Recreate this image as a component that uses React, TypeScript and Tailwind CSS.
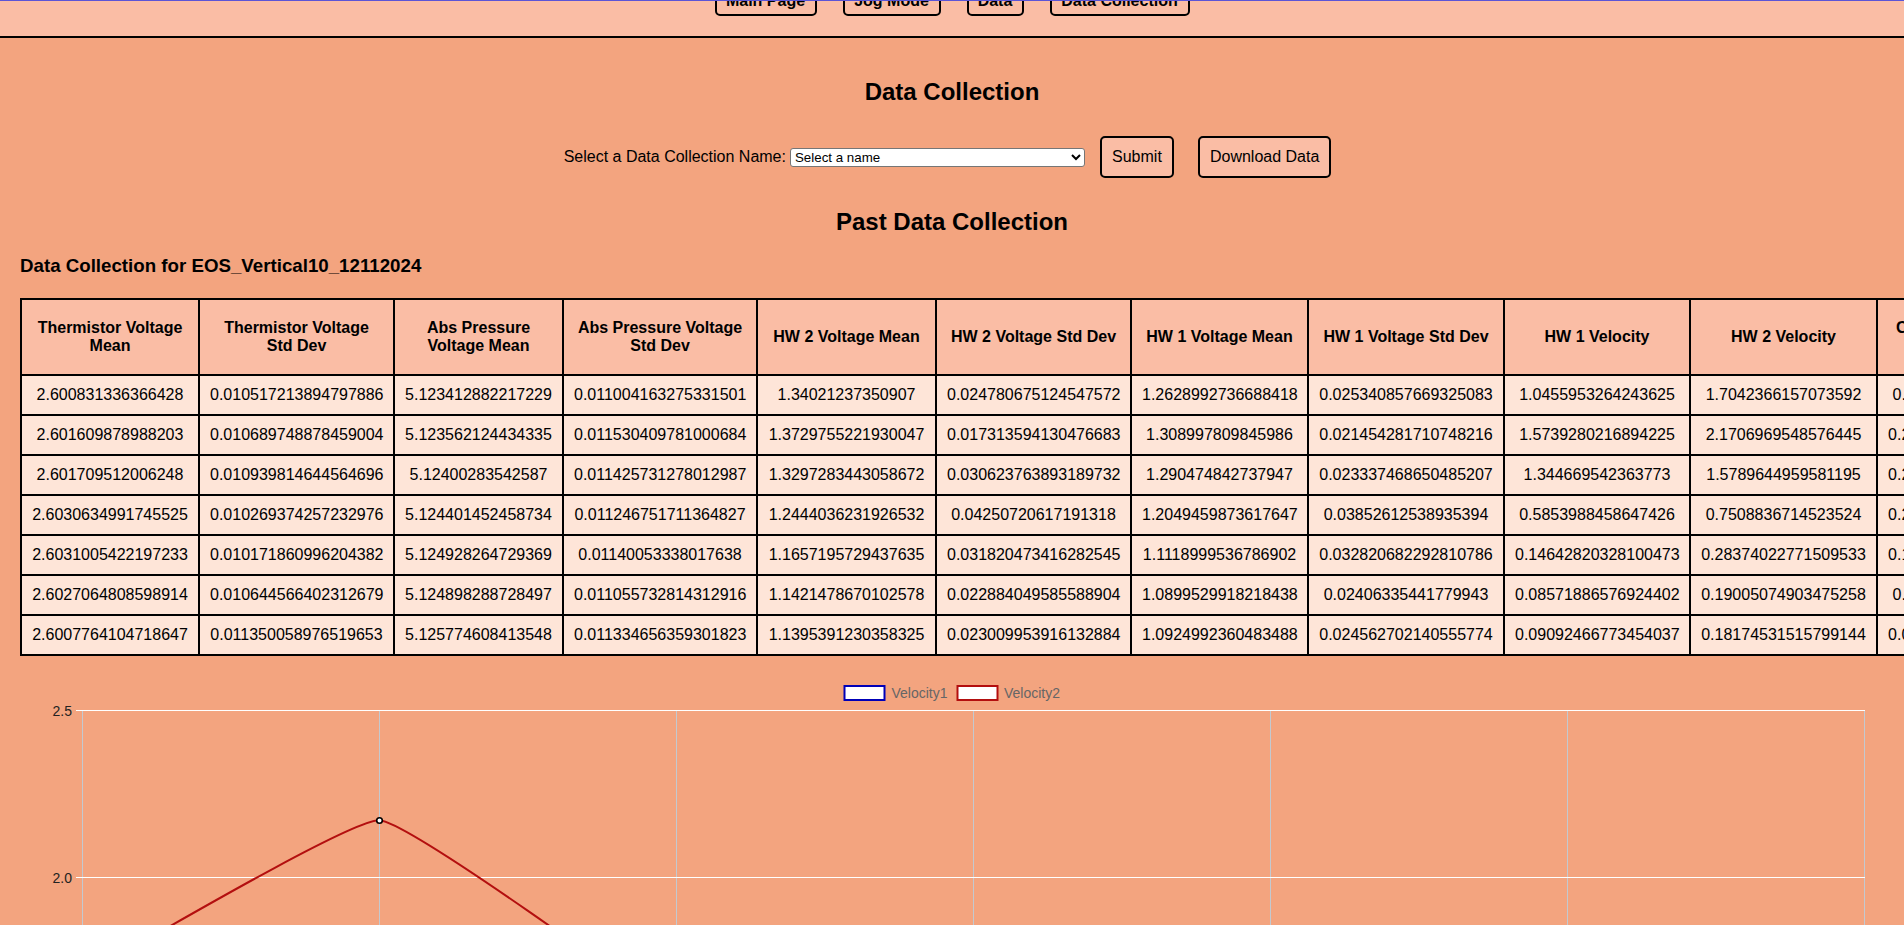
const navItems = [
  { label: 'Main Page', width: 'w-[102px]' },
  { label: 'Jog Mode', width: 'w-[98px]' },
  { label: 'Data', width: 'w-[57px]' },
  { label: 'Data Collection', width: 'w-[140px]' },
];

const columns = [
  { title: 'Thermistor Voltage Mean', width: 'w-[178px]' },
  { title: 'Thermistor Voltage Std Dev', width: 'w-[195px]' },
  { title: 'Abs Pressure Voltage Mean', width: 'w-[169px]' },
  { title: 'Abs Pressure Voltage Std Dev', width: 'w-[194px]' },
  { title: 'HW 2 Voltage Mean', width: 'w-[179px]' },
  { title: 'HW 2 Voltage Std Dev', width: 'w-[195px]' },
  { title: 'HW 1 Voltage Mean', width: 'w-[177px]' },
  { title: 'HW 1 Voltage Std Dev', width: 'w-[196px]' },
  { title: 'HW 1 Velocity', width: 'w-[186px]' },
  { title: 'HW 2 Velocity', width: 'w-[187px]' },
  { title: 'Calculated Flow Rate', width: 'w-[160px]' },
];

// last column runs off the screen, only its first characters show
const rows = [
  ['2.600831336366428', '0.010517213894797886', '5.123412882217229', '0.011004163275331501', '1.34021237350907', '0.024780675124547572', '1.2628992736688418', '0.025340857669325083', '1.0455953264243625', '1.7042366157073592', '0.3000000000000'],
  ['2.601609878988203', '0.010689748878459004', '5.123562124434335', '0.011530409781000684', '1.3729755221930047', '0.017313594130476683', '1.308997809845986', '0.021454281710748216', '1.5739280216894225', '2.1706969548576445', '0.20000000000000'],
  ['2.601709512006248', '0.010939814644564696', '5.12400283542587', '0.011425731278012987', '1.3297283443058672', '0.030623763893189732', '1.290474842737947', '0.023337468650485207', '1.344669542363773', '1.5789644959581195', '0.20000000000000'],
  ['2.6030634991745525', '0.010269374257232976', '5.124401452458734', '0.011246751711364827', '1.2444036231926532', '0.04250720617191318', '1.2049459873617647', '0.03852612538935394', '0.5853988458647426', '0.7508836714523524', '0.20000000000000'],
  ['2.6031005422197233', '0.010171860996204382', '5.124928264729369', '0.01140053338017638', '1.1657195729437635', '0.031820473416282545', '1.1118999536786902', '0.032820682292810786', '0.14642820328100473', '0.28374022771509533', '0.10000000000000'],
  ['2.6027064808598914', '0.010644566402312679', '5.124898288728497', '0.011055732814312916', '1.1421478670102578', '0.022884049585588904', '1.0899529918218438', '0.02406335441779943', '0.08571886576924402', '0.19005074903475258', '0.1000000000000'],
  ['2.6007764104718647', '0.011350058976519653', '5.125774608413548', '0.011334656359301823', '1.1395391230358325', '0.023009953916132884', '1.0924992360483488', '0.024562702140555774', '0.09092466773454037', '0.18174531515799144', '0.00000000000000'],
];

const gridX = [82.5, 379.5, 676.5, 973.5, 1270.5, 1567.5, 1864.5];

function VelocityChart() {
  return (
    <svg viewBox="0 656 1904 269" className="block h-[269px] w-[1904px]">
      {/* legend */}
      <rect x="844.5" y="686" width="40" height="14" fill="#fff" stroke="#0000b8" strokeWidth="2" />
      <text x="891.5" y="697.5" fontSize="14" fill="#666">Velocity1</text>
      <rect x="957.5" y="686" width="40" height="14" fill="#fff" stroke="#b30f0f" strokeWidth="2" />
      <text x="1004" y="697.5" fontSize="14" fill="#666">Velocity2</text>

      {/* grid */}
      {gridX.map((x) => (
        <line key={x} x1={x} x2={x} y1="710" y2="925" stroke="#c3c9d0" strokeWidth="1" />
      ))}
      {[710.5, 877.5].map((y) => (
        <line key={y} x1="76" x2="1865" y1={y} y2={y} stroke="#fff" strokeWidth="1" />
      ))}
      <text x="72" y="715.5" fontSize="14" textAnchor="end" fill="#222">2.5</text>
      <text x="72" y="882.5" fontSize="14" textAnchor="end" fill="#222">2.0</text>

      {/* Velocity2 line */}
      <path
        d="M82.6 976C112.3 960.4 350.8 818.3 379.5 820.3C410.1 822.5 648.7 995.8 676.5 1018"
        fill="none"
        stroke="#b30f0f"
        strokeWidth="2"
      />
      <circle cx="379.5" cy="820.5" r="2.8" fill="#fff" stroke="#000" strokeWidth="1.6" />
    </svg>
  );
}

export default function App() {
  return (
    <div className="h-[925px] overflow-hidden bg-[#f3a47f] font-['Liberation_Sans',Arial,sans-serif] text-base leading-[18px] text-black">
      <header className="flex h-[38px] items-end justify-center gap-[26px] overflow-hidden border-t border-b-2 border-t-[#5b55d6] border-b-black bg-[#fabda5] pb-[20px]">
        {navItems.map((item) => (
          <button
            key={item.label}
            className={`shrink-0 rounded-[5px] border-2 border-black bg-[#fabda5] pt-2 pb-1 text-center font-bold ${item.width}`}
          >
            {item.label}
          </button>
        ))}
      </header>

      <main className="pt-10">
        <h2 className="text-center text-2xl leading-[28px] font-bold">Data Collection</h2>

        <form className="mt-[30px] flex items-center justify-center pr-[9px]">
          <label>Select a Data Collection Name:</label>
          <select className="ml-1 h-[19px] w-[295px] rounded-[3px] border border-[#767676] bg-white text-[13.33px] leading-none">
            <option>Select a name</option>
          </select>
          <button type="button" className="ml-[15px] w-[74px] rounded-[5px] border-2 border-black bg-[#fabda5] py-2.5 text-center">
            Submit
          </button>
          <button type="button" className="ml-6 rounded-[5px] border-2 border-black bg-[#fabda5] px-2.5 py-2.5">
            Download Data
          </button>
        </form>

        <h2 className="mt-[30px] text-center text-2xl leading-[28px] font-bold">Past Data Collection</h2>

        <h3 className="mt-[19px] ml-5 text-[18.72px] leading-[22px] font-bold">Data Collection for EOS_Vertical10_12112024</h3>

        <div className="mt-[21px] overflow-hidden pl-5">
          <table className="w-[2016px] table-fixed border-collapse">
            <colgroup>
              {columns.map((col) => (
                <col key={col.title} className={col.width} />
              ))}
            </colgroup>
            <thead>
              <tr>
                {columns.map((col) => (
                  <th key={col.title} className="h-[76px] border-2 border-black bg-[#fabda5] p-2.5 text-center font-bold">
                    {col.title}
                  </th>
                ))}
              </tr>
            </thead>
            <tbody>
              {rows.map((row) => (
                <tr key={row[0]}>
                  {row.map((value, i) => (
                    <td key={i} className="border-2 border-black bg-[#fee5d8] p-2.5 text-center whitespace-nowrap">
                      {value}
                    </td>
                  ))}
                </tr>
              ))}
            </tbody>
          </table>
        </div>

        <VelocityChart />
      </main>
    </div>
  );
}
